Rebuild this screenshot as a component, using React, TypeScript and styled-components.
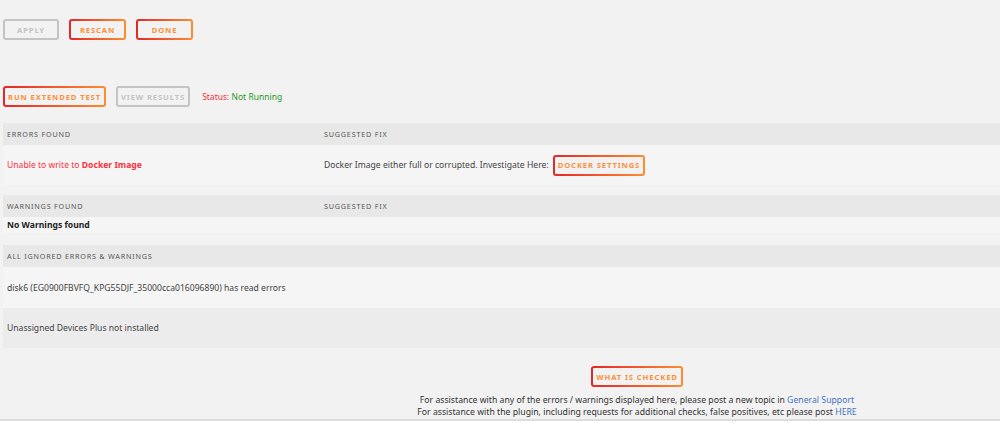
import React from 'react';
import styled, { createGlobalStyle, css } from 'styled-components';

const GlobalStyle = createGlobalStyle`
  html, body {
    margin: 0;
    padding: 0;
    background: #f2f2f2;
  }
  body {
    font-family: "Noto Sans", "Open Sans", sans-serif;
    color: #333;
    overflow: hidden;
  }
`;

const Page = styled.div`
  height: 421px;
  box-sizing: border-box;
  padding: 19px 0 0 3px;
  border-bottom: 2px solid #dcdcdc;
  display: flex;
  flex-direction: column;
`;

const Toolbar = styled.div<{ $top?: number }>`
  display: flex;
  align-items: center;
  gap: 10px;
  margin-top: ${p => p.$top || 0}px;
`;

const Button = styled.button<{ $disabled?: boolean }>`
  height: 21px;
  box-sizing: border-box;
  padding: 0 3px;
  border: 2px solid transparent;
  border-radius: 3px;
  font-family: "Noto Sans", sans-serif;
  font-weight: 700;
  font-size: 7.7px;
  letter-spacing: 0.85px;
  text-transform: uppercase;
  cursor: pointer;
  ${p => p.$disabled
    ? css`
      border-color: #c4c4c4;
      background: #f2f2f2;
      color: #c4c4c4;
    `
    : css`
      background:
        linear-gradient(#f2f2f2, #f2f2f2) padding-box,
        linear-gradient(90deg, #e22828, #ff8c2f) border-box;
      color: #fd8f3a;
    `}
`;

const Status = styled.span`
  margin-left: 2px;
  font-size: 8.5px;
  color: #f0303a;
`;

const Running = styled.span`
  color: #1f9a1f;
`;

const Section = styled.div<{ $top: number }>`
  margin-top: ${p => p.$top}px;
`;

const HeadRow = styled.div`
  display: grid;
  grid-template-columns: 317px 1fr;
  align-items: center;
  height: 22px;
  padding-left: 4px;
  background: #e8e8e8;
  font-size: 7.2px;
  letter-spacing: 0.8px;
  color: #555;
  text-transform: uppercase;
`;

const Row = styled.div<{ $h: number; $shade?: boolean }>`
  display: grid;
  grid-template-columns: 317px 1fr;
  align-items: center;
  height: ${p => p.$h}px;
  padding-left: 4px;
  background: ${p => (p.$shade ? '#ececec' : '#f5f5f5')};
  font-size: 8.6px;
  color: #444;
`;

const Wide = styled.span`
  grid-column: 1 / 3;
`;

const Cell = styled.div`
  display: flex;
  align-items: center;
  gap: 4px;
`;

const ErrorText = styled.span`
  color: #ff2f3c;
  b {
    font-weight: 700;
  }
`;

const Bold = styled.span`
  font-weight: 700;
  color: #222;
`;

const Footer = styled.div`
  margin-top: 18px;
  padding-left: 271px;
  display: flex;
  flex-direction: column;
  align-items: center;
  font-size: 8.7px;
  line-height: 12px;
  color: #333;
`;

const Notes = styled.div`
  margin-top: 7px;
  text-align: center;
`;

const Link = styled.a`
  color: #4a72c4;
  text-decoration: none;
`;

export default function App() {
  return (
    <>
      <GlobalStyle />
      <Page>
        <Toolbar>
          <Button $disabled style={{ width: 56 }}>Apply</Button>
          <Button style={{ width: 57 }}>Rescan</Button>
          <Button style={{ width: 57 }}>Done</Button>
        </Toolbar>
        <Toolbar $top={46}>
          <Button>Run Extended Test</Button>
          <Button $disabled>View Results</Button>
          <Status>Status: <Running>Not Running</Running></Status>
        </Toolbar>

        <Section $top={16}>
          <HeadRow>
            <span>Errors Found</span>
            <span>Suggested Fix</span>
          </HeadRow>
          <Row $h={40}>
            <ErrorText>Unable to write to <b>Docker Image</b></ErrorText>
            <Cell>
              Docker Image either full or corrupted. Investigate Here:
              <Button>Docker Settings</Button>
            </Cell>
          </Row>
        </Section>

        <Section $top={10}>
          <HeadRow>
            <span>Warnings Found</span>
            <span>Suggested Fix</span>
          </HeadRow>
          <Row $h={16}>
            <Bold>No Warnings found</Bold>
          </Row>
        </Section>

        <Section $top={12}>
          <HeadRow>
            <span>All Ignored Errors &amp; Warnings</span>
          </HeadRow>
          <Row $h={41}>
            <Wide>disk6 (EG0900FBVFQ_KPG55DJF_35000cca016096890) has read errors</Wide>
          </Row>
          <Row $h={40} $shade>
            <Wide>Unassigned Devices Plus not installed</Wide>
          </Row>
        </Section>

        <Footer>
          <Button>What Is Checked</Button>
          <Notes>
            For assistance with any of the errors / warnings displayed here, please post a new topic in{' '}
            <Link href="#">General Support</Link>
            <br />
            For assistance with the plugin, including requests for additional checks, false positives, etc please post{' '}
            <Link href="#">HERE</Link>
          </Notes>
        </Footer>
      </Page>
    </>
  );
}
